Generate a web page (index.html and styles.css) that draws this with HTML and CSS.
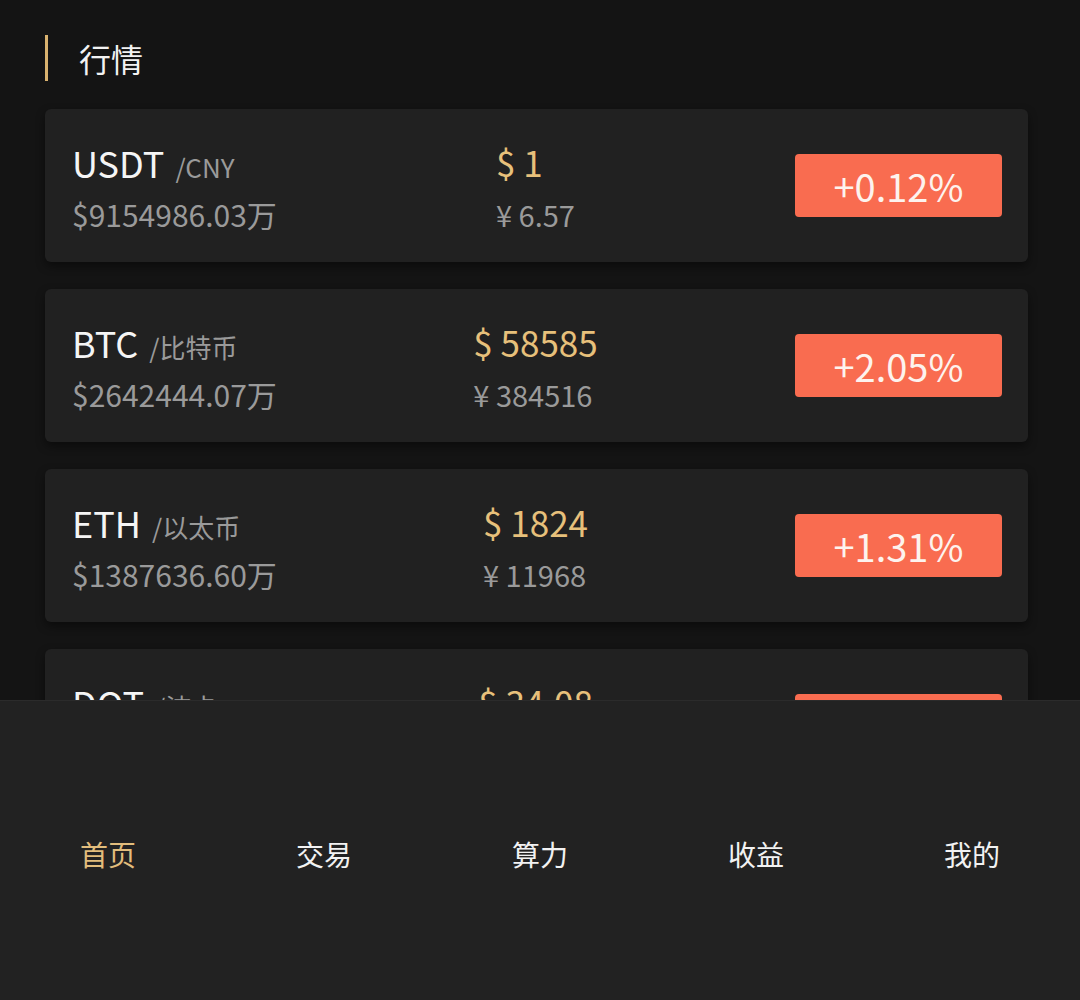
FILE: index.html
```html
<!DOCTYPE html>
<html lang="zh-CN">
<head>
<meta charset="utf-8">
<title>行情</title>
<link rel="stylesheet" href="styles.css">
</head>
<body>
<div class="app">
  <main class="market">
    <h1 class="section-title">行情</h1>
    <ul class="coin-list">
      <li class="coin-card">
        <div class="coin-info">
          <div class="coin-name">USDT<span class="coin-pair">/CNY</span></div>
          <div class="coin-volume">$9154986.03万</div>
        </div>
        <div class="coin-price">
          <div class="price-usd">$ 1</div>
          <div class="price-cny">¥ 6.57</div>
        </div>
        <div class="coin-change"><span class="change-badge">+0.12%</span></div>
      </li>
      <li class="coin-card">
        <div class="coin-info">
          <div class="coin-name">BTC<span class="coin-pair">/比特币</span></div>
          <div class="coin-volume">$2642444.07万</div>
        </div>
        <div class="coin-price">
          <div class="price-usd">$ 58585</div>
          <div class="price-cny">¥ 384516</div>
        </div>
        <div class="coin-change"><span class="change-badge">+2.05%</span></div>
      </li>
      <li class="coin-card">
        <div class="coin-info">
          <div class="coin-name">ETH<span class="coin-pair">/以太币</span></div>
          <div class="coin-volume">$1387636.60万</div>
        </div>
        <div class="coin-price">
          <div class="price-usd">$ 1824</div>
          <div class="price-cny">¥ 11968</div>
        </div>
        <div class="coin-change"><span class="change-badge">+1.31%</span></div>
      </li>
      <li class="coin-card">
        <div class="coin-info">
          <div class="coin-name">DOT<span class="coin-pair">/波卡</span></div>
          <div class="coin-volume">$3213547.12万</div>
        </div>
        <div class="coin-price">
          <div class="price-usd">$ 34.08</div>
          <div class="price-cny">¥ 223.71</div>
        </div>
        <div class="coin-change"><span class="change-badge">+3.42%</span></div>
      </li>
    </ul>
  </main>
  <nav class="tabbar">
    <a class="tab tab-active">首页</a>
    <a class="tab">交易</a>
    <a class="tab">算力</a>
    <a class="tab">收益</a>
    <a class="tab">我的</a>
  </nav>
</div>
</body>
</html>
```
FILE: styles.css
```css
* { box-sizing: border-box; }
html, body {
  margin: 0;
  padding: 0;
  background: #141414;
  font-family: "Noto Sans CJK SC", "Noto Sans", sans-serif;
}
.app {
  height: 1000px;
  display: flex;
  flex-direction: column;
  overflow: hidden;
}
.market {
  flex: 1;
  min-height: 0;
  overflow: hidden;
  padding: 35px 52px 0 45px;
}
.section-title {
  margin: 0;
  border-left: 3px solid #d9b26f;
  padding-left: 31px;
  height: 46px;
  line-height: 46px;
  font-size: 32px;
  font-weight: 400;
  color: #f2f2f2;
}
.coin-list {
  list-style: none;
  margin: 28px 0 0;
  padding: 0;
  display: flex;
  flex-direction: column;
  gap: 27px;
}
.coin-card {
  height: 153px;
  background: #212121;
  border-radius: 6px;
  box-shadow: 0 4px 10px rgba(0, 0, 0, 0.45);
  display: grid;
  grid-template-columns: 1fr auto 1fr;
  align-items: start;
  padding: 28px 26px 0 27px;
}
.coin-name {
  height: 50px;
  line-height: 50px;
  font-size: 36px;
  color: #f5f5f5;
}
.coin-pair {
  margin-left: 11px;
  font-size: 26px;
  color: #9a9a9a;
}
.coin-volume {
  height: 54px;
  line-height: 54px;
  font-size: 30px;
  color: #9a9a9a;
}
.coin-price {
  display: flex;
  flex-direction: column;
  align-items: flex-start;
  margin-left: -3px;
}
.price-usd {
  height: 50px;
  line-height: 50px;
  font-size: 35px;
  color: #e7c07b;
}
.price-cny {
  height: 54px;
  line-height: 54px;
  font-size: 29px;
  color: #9a9a9a;
}
.coin-change {
  justify-self: end;
  padding-top: 17px;
}
.change-badge {
  display: flex;
  align-items: center;
  justify-content: center;
  width: 207px;
  height: 63px;
  border-radius: 4px;
  background: #f96c50;
  color: #fdf3ee;
  font-size: 38px;
}
.tabbar {
  flex: 0 0 300px;
  background: #222222;
  border-top: 1px solid #2b2b2b;
  display: grid;
  grid-template-columns: repeat(5, 1fr);
  align-items: start;
  padding-top: 132px;
}
.tab {
  text-align: center;
  font-size: 28px;
  line-height: 42px;
  color: #f2f2f2;
  text-decoration: none;
}
.tab-active {
  color: #e2bd7c;
}
```
